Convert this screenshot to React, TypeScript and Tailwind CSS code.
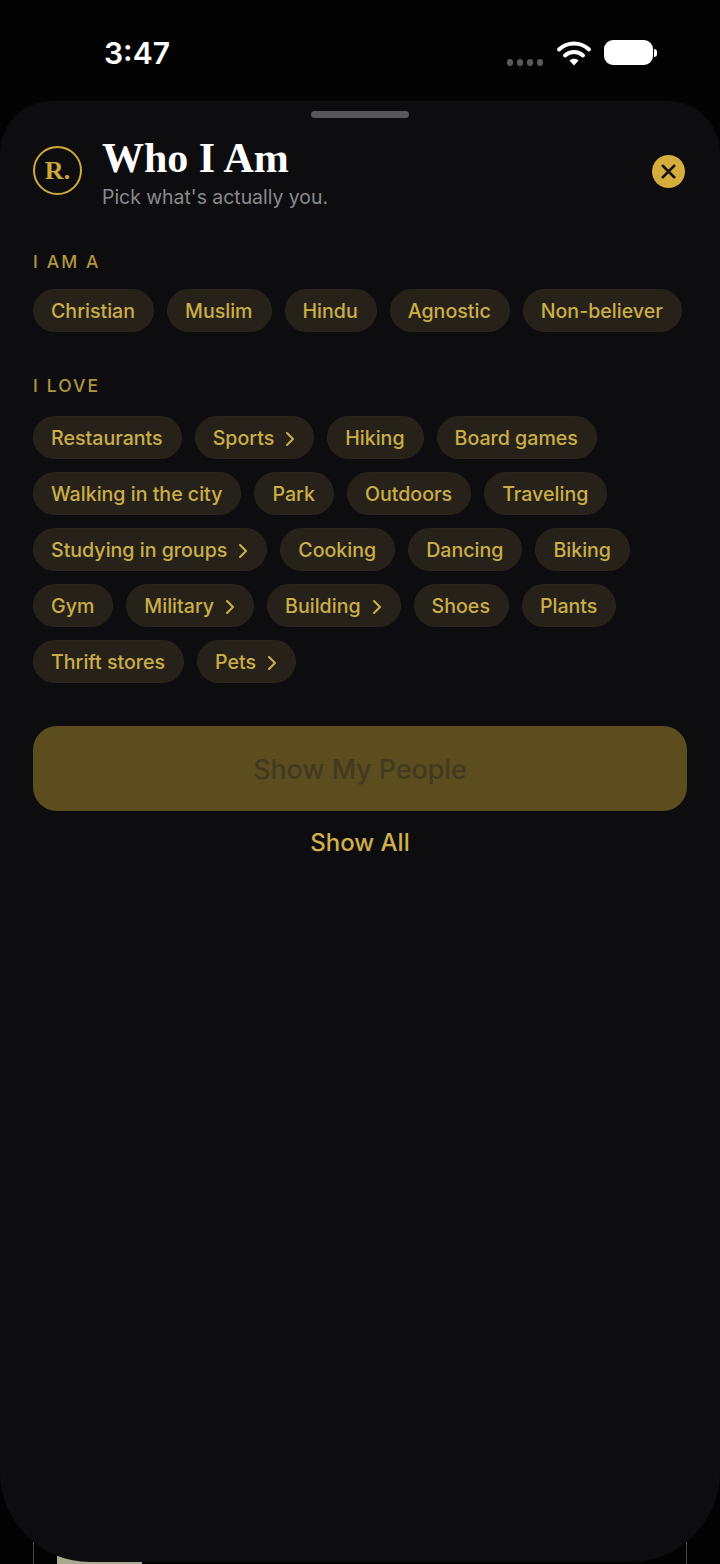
import React from 'react';
import { X } from 'lucide-react';

const faith = ['Christian', 'Muslim', 'Hindu', 'Agnostic', 'Non-believer'];

const loves: { label: string; more?: boolean }[][] = [
  [{ label: 'Restaurants' }, { label: 'Sports', more: true }, { label: 'Hiking' }, { label: 'Board games' }],
  [{ label: 'Walking in the city' }, { label: 'Park' }, { label: 'Outdoors' }, { label: 'Traveling' }],
  [{ label: 'Studying in groups', more: true }, { label: 'Cooking' }, { label: 'Dancing' }, { label: 'Biking' }],
  [{ label: 'Gym' }, { label: 'Military', more: true }, { label: 'Building', more: true }, { label: 'Shoes' }, { label: 'Plants' }],
  [{ label: 'Thrift stores' }, { label: 'Pets', more: true }],
];

const Chip: React.FC<{ label: string; more?: boolean }> = ({ label, more }) => (
  <div className="flex h-[43px] items-center whitespace-nowrap rounded-full border border-[#2a2519] bg-[#26221a] pl-[17px] pr-[18px] pt-[2px] text-[19.6px] font-medium text-[#ccae48]">
    <span>{label}</span>
    {more && (
      <svg width="10" height="16" viewBox="0 0 10 16" fill="none" className="ml-[11px]">
        <path d="M2 2L8 8L2 14" stroke="#ccae48" strokeWidth="2.1" strokeLinecap="round" strokeLinejoin="round" />
      </svg>
    )}
  </div>
);

const Wifi = () => (
  <svg width="36" height="26" viewBox="0 0 36 26" fill="none">
    <path d="M3 9.5C11.5 1.5 24.5 1.5 33 9.5" stroke="#fff" strokeWidth="4" strokeLinecap="round" />
    <path d="M9 15.5C14 10.8 22 10.8 27 15.5" stroke="#fff" strokeWidth="4" strokeLinecap="round" />
    <path d="M13.4 20.6C16 18.2 20 18.2 22.6 20.6L18 25.4Z" fill="#fff" />
  </svg>
);

export default function App() {
  return (
    <div className="relative h-[1564px] w-[720px] overflow-hidden bg-[#030304] font-['Inter','Liberation_Sans',sans-serif]">
      {/* status bar */}
      <div className="relative h-[101px]">
        <span className="absolute left-[104px] top-[34px] text-[30px] font-semibold leading-[38px] text-white">3:47</span>
        <div className="absolute left-[507px] top-[59px] flex gap-[4px]">
          <div className="h-[7px] w-[6px] rounded-full bg-[#5a5a5c]" />
          <div className="h-[7px] w-[6px] rounded-full bg-[#5a5a5c]" />
          <div className="h-[7px] w-[6px] rounded-full bg-[#5a5a5c]" />
          <div className="h-[7px] w-[6px] rounded-full bg-[#5a5a5c]" />
        </div>
        <div className="absolute left-[556px] top-[40px]">
          <Wifi />
        </div>
        <div className="absolute left-[604px] top-[40px] flex items-center gap-[1px]">
          <div className="h-[25px] w-[49px] rounded-[9px] bg-white" />
          <div className="h-[8px] w-[3px] rounded-r-full bg-white" />
        </div>
      </div>

      {/* card peeking out below the sheet */}
      <div className="absolute left-[33px] top-[1530px] h-[40px] w-[654px] border-x border-[#4a4636]" />
      <div className="absolute left-[57px] top-[1554px] h-[12px] w-[85px] bg-[#a8a88e]" />

      {/* sheet */}
      <div className="relative z-10 h-[1461px] rounded-t-[52px] rounded-b-[90px] bg-[#0d0d0f] px-[33px]">
        <div className="absolute left-[311px] top-[10px] h-[7px] w-[98px] rounded-full bg-[#58585b]" />

        <div className="flex items-start pt-[35px]">
          <div className="mt-[10px] flex h-[49px] w-[49px] shrink-0 items-center justify-center rounded-full border-[2.5px] border-[#cfa93a] font-['Liberation_Serif',serif] text-[26px] font-bold text-[#cfa93a]">
            R.
          </div>
          <div className="ml-[20px] flex-1">
            <h1 className="font-['Liberation_Serif',serif] text-[42px] font-bold leading-[44px] text-white">Who I Am</h1>
            <p className="mt-[5px] text-[19.4px] leading-[24px] text-[#8a8a8e]">Pick what's actually you.</p>
          </div>
          <button className="mt-[19px] mr-[2px] flex h-[33px] w-[33px] items-center justify-center rounded-full bg-[#d4ad3c] text-[#141209]">
            <X size={23} strokeWidth={2.6} />
          </button>
        </div>

        <h2 className="mt-[42px] text-[17.5px] font-medium leading-[22px] tracking-[2.1px] text-[#b1963f]">I AM A</h2>
        <div className="mt-[16px] flex gap-[13px]">
          {faith.map((f) => (
            <Chip key={f} label={f} />
          ))}
        </div>

        <h2 className="mt-[43px] text-[17.5px] font-medium leading-[22px] tracking-[2.1px] text-[#b1963f]">I LOVE</h2>
        <div className="mt-[19px] flex flex-col gap-[13px]">
          {loves.map((row, i) => (
            <div key={i} className="flex gap-[13px]">
              {row.map((c) => (
                <Chip key={c.label} label={c.label} more={c.more} />
              ))}
            </div>
          ))}
        </div>

        <button className="mt-[43px] flex h-[85px] w-[654px] items-center justify-center rounded-[24px] bg-[#5c4d1f] pt-[1px] text-[26.8px] font-medium leading-[40px] text-[#423a20]">
          Show My People
        </button>
        <div className="mt-[15px] text-center text-[24px] font-medium leading-[34px] text-[#d0b04a]">Show All</div>
      </div>
    </div>
  );
}
